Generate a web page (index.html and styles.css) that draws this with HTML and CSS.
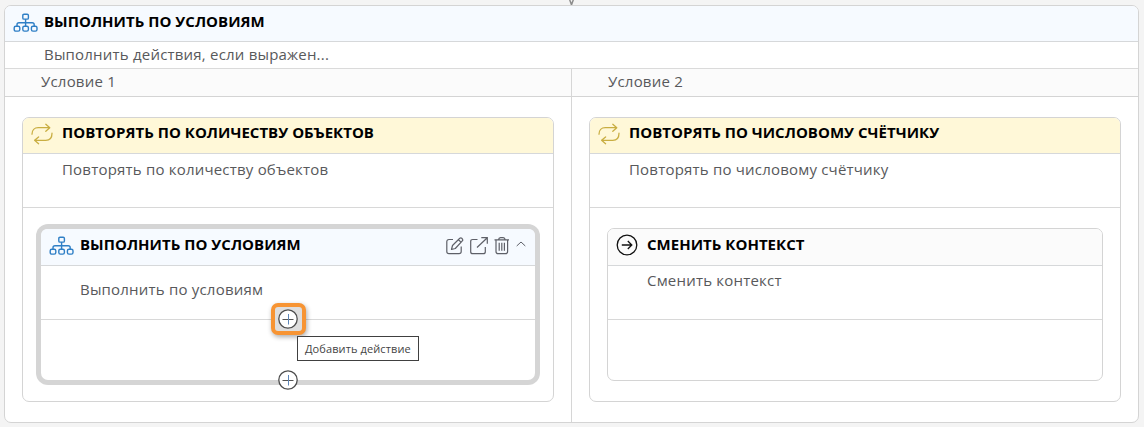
FILE: index.html
```html
<!DOCTYPE html>
<html lang="ru">
<head>
<meta charset="utf-8">
<title>Выполнить по условиям</title>
<link rel="stylesheet" href="styles.css">
</head>
<body>
<svg class="defs" width="0" height="0">
  <symbol id="tree" viewBox="0 0 26 20"><g fill="none" stroke="#2f7fc6" stroke-width="1.4"><rect x="9.8" y="1.2" width="5.6" height="4.9" rx="1.2"/><rect x="1.2" y="13.2" width="5.6" height="4.9" rx="1.6"/><rect x="9.8" y="13.2" width="5.6" height="4.9" rx="1.6"/><rect x="18.4" y="13.2" width="5.6" height="4.9" rx="1.6"/><path d="M12.6 6.1v7.1M4 13.2v-1.4q0-2 2-2h13.2q2 0 2 2v1.4"/></g></symbol>
  <symbol id="loop" viewBox="0 0 22 22"><g fill="none" stroke="#c9ae42" stroke-width="1.3" stroke-linecap="round" stroke-linejoin="round"><path d="M1 11.2C1 7 3.500 4.700 7.200 4.700H18.700M14.800 1.300l4 3.400-4 3.500M21 10.200c0 4.700-2.500 7.100-6.200 7.100H3.700M7.600 13.900l-4 3.400 4 3.400"/></g></symbol>
  <symbol id="plus" viewBox="0 0 20 20"><circle cx="10" cy="10" r="9.2" fill="#fff" stroke="#4d4d4d" stroke-width="1.300"/><path d="M4.500 10.500h11" stroke="#555"/><path d="M10.500 5v10.500" stroke="#5f87b8"/></symbol>
</svg>
<div class="connector"></div>
<section class="card root">
  <header class="head blue"><svg class="ic-tree" width="26" height="20"><use href="#tree"/></svg><h2 class="title">ВЫПОЛНИТЬ ПО УСЛОВИЯМ</h2></header>
  <p class="summary">Выполнить действия, если выражен...</p>
  <div class="branches">
    <div class="branch">
      <div class="condition">Условие 1</div>
      <section class="card loop">
        <header class="head yellow"><svg class="ic-loop" width="22" height="22"><use href="#loop"/></svg><h2 class="title">ПОВТОРЯТЬ ПО КОЛИЧЕСТВУ ОБЪЕКТОВ</h2></header>
        <p class="desc">Повторять по количеству объектов</p>
        <section class="card action selected">
          <header class="head blue"><svg class="ic-tree" width="26" height="20"><use href="#tree"/></svg><h2 class="title">ВЫПОЛНИТЬ ПО УСЛОВИЯМ</h2>
            <div class="tools">
              <svg width="18" height="18" viewBox="0 0 18 18"><g fill="none" stroke="#5e6068" stroke-width="1.200" stroke-linejoin="round"><path d="M7 2.500H3Q.8 2.500.8 4.700v9.800q0 2.200 2.200 2.200h10q2.200 0 2.200-2.200v-5"/><path d="m5.500 12.500 1-4 7.300-7.200q1-.8 2 0l.6.700q.8 1-.1 1.900L9.300 11.500zM12.500 2.800l2.700 2.600"/></g></svg>
              <svg width="18" height="18" viewBox="0 0 18 18"><g fill="none" stroke="#5e6068" stroke-width="1.200"><path d="M7.500 2.500H2.700Q.7 2.500.7 4.500v10.200q0 2 2 2h10.600q2 0 2-2V10M7 10.500 17.300.7M11.300.7h6v6"/></g></svg>
              <svg width="16" height="18" viewBox="0 0 16 18"><g fill="none" stroke="#5e6068" stroke-width="1.200"><path d="M.5 2.800h14.500M4.500 2.800Q4.800.7 6.500.7h2.700q1.700 0 2 2.100M2 2.800v11.600q0 2.200 2.200 2.200h7.200q2.200 0 2.200-2.200V2.800M5.200 5.800v8M7.800 5.800v8M10.400 5.800v8"/></g></svg>
              <svg class="chev" width="10" height="6" viewBox="0 0 10 6"><path d="m.7 5 4.300-4 4.300 4" fill="none" stroke="#5e6068"/></svg>
            </div>
          </header>
          <p class="desc">Выполнить по условиям</p>
          <button class="add add-first"><svg width="20" height="20"><use href="#plus"/></svg></button>
          <button class="add add-last"><svg width="20" height="20"><use href="#plus"/></svg></button>
          <div class="tooltip">Добавить действие</div>
        </section>
      </section>
    </div>
    <div class="branch">
      <div class="condition">Условие 2</div>
      <section class="card loop">
        <header class="head yellow"><svg class="ic-loop" width="22" height="22"><use href="#loop"/></svg><h2 class="title">ПОВТОРЯТЬ ПО ЧИСЛОВОМУ СЧЁТЧИКУ</h2></header>
        <p class="desc">Повторять по числовому счётчику</p>
        <section class="card action">
          <header class="head gray"><svg class="ic-go" width="22" height="22" viewBox="0 0 22 22"><g fill="none" stroke="#111" stroke-width="1.300"><circle cx="11" cy="11" r="9.800"/><path d="M5.800 11h10M11.800 7l4 4-4 4"/></g></svg><h2 class="title">СМЕНИТЬ КОНТЕКСТ</h2></header>
          <p class="desc">Сменить контекст</p>
        </section>
      </section>
    </div>
  </div>
</section>
</body>
</html>
```
FILE: styles.css
```css
* { box-sizing: border-box; }
body { margin: 0; width: 1144px; height: 427px; padding: 5px 5px 0 4px; overflow: hidden; background: #f4f4f4; font: 15px/20px "Open Sans", "Noto Sans", sans-serif; letter-spacing: .2px; color: #58595b; }
h2, p { margin: 0; font-size: inherit; }
.defs { position: absolute; }
.connector { position: absolute; left: 569px; top: 0; width: 5px; height: 5px; background: #8c8c8c; clip-path: polygon(0 0, 30% 0, 50% 50%, 70% 0, 100% 0, 65% 100%, 35% 100%); }
.card { border: 1px solid #d4d4d4; border-radius: 7px; background: #fff; }
.root { height: 418px; display: flex; flex-direction: column; }
.head { display: flex; align-items: flex-start; height: 36px; border-bottom: 1px solid #d6d8da; border-radius: 6px 6px 0 0; flex: none; }
.blue { background: #f6faff; }
.yellow { background: #fff8d8; }
.gray { background: #fbfbfb; }
.title { color: #000; font-weight: 700; font-size: 15px; line-height: 20px; letter-spacing: .03px; white-space: nowrap; padding-top: 5px; }
.loop > .head .title { padding-top: 4px; }
.action > .head .title { padding-top: 5px; }
.ic-tree { margin: 7px 5px 0 7px; flex: none; }
.root > .head .ic-tree { margin-left: 8px; }
.ic-loop { margin: 5px 9px 0 8px; flex: none; }
.ic-go { margin: 5px 9px 0 8px; flex: none; }
.summary { height: 27px; padding: 2px 0 0 39px; border-bottom: 1px solid #dadada; }
.branches { display: grid; grid-template-columns: 566px 567px; flex: 1; }
.branch + .branch { border-left: 1px solid #d6d6d6; }
.condition { height: 28px; background: #fbfbfb; border-bottom: 1px solid #d4d4d4; padding: 2px 0 0 36px; }
.loop { width: 532px; height: 285px; margin: 20px 0 0 17px; }
.desc { height: 54px; padding: 5px 0 0 39px; border-bottom: 1px solid #d8d8d8; }
.action { position: relative; width: 496px; height: 153px; margin: 20px 0 0 17px; }
.action > .head { height: 37px; }
.action > .desc { padding-top: 4px; }
.selected { margin-left: 18px; width: 494px; height: 151px; margin-top: 21px; border: 0; box-shadow: 0 0 0 5px #d5d5d5; }
.selected > .desc { padding-top: 13px; }
.selected .ic-tree { margin-left: 8px; }
.tools { display: flex; align-items: center; gap: 6px; margin: 8px 9px 0 auto; }
.chev { margin-bottom: 4px; }
.add { position: absolute; padding: 0; border: 0; background: none; width: 20px; height: 20px; border-radius: 10px; }
.add svg { display: block; }
.add-first { left: 230px; top: 74px; width: 35px; height: 32px; padding: 2px 4px 4px 3px; border: 4px solid #f79433; border-radius: 7px; background: #dedede; box-shadow: 1px 2px 5px #0005; }
.add-last { left: 237px; top: 141px; }
.tooltip { position: absolute; left: 256px; top: 107px; width: 122px; height: 25px; padding: 2px 0 0 7px; border: 1px solid #404040; background: #fff; font-size: 11px; letter-spacing: .1px; color: #444; white-space: nowrap; }
```
